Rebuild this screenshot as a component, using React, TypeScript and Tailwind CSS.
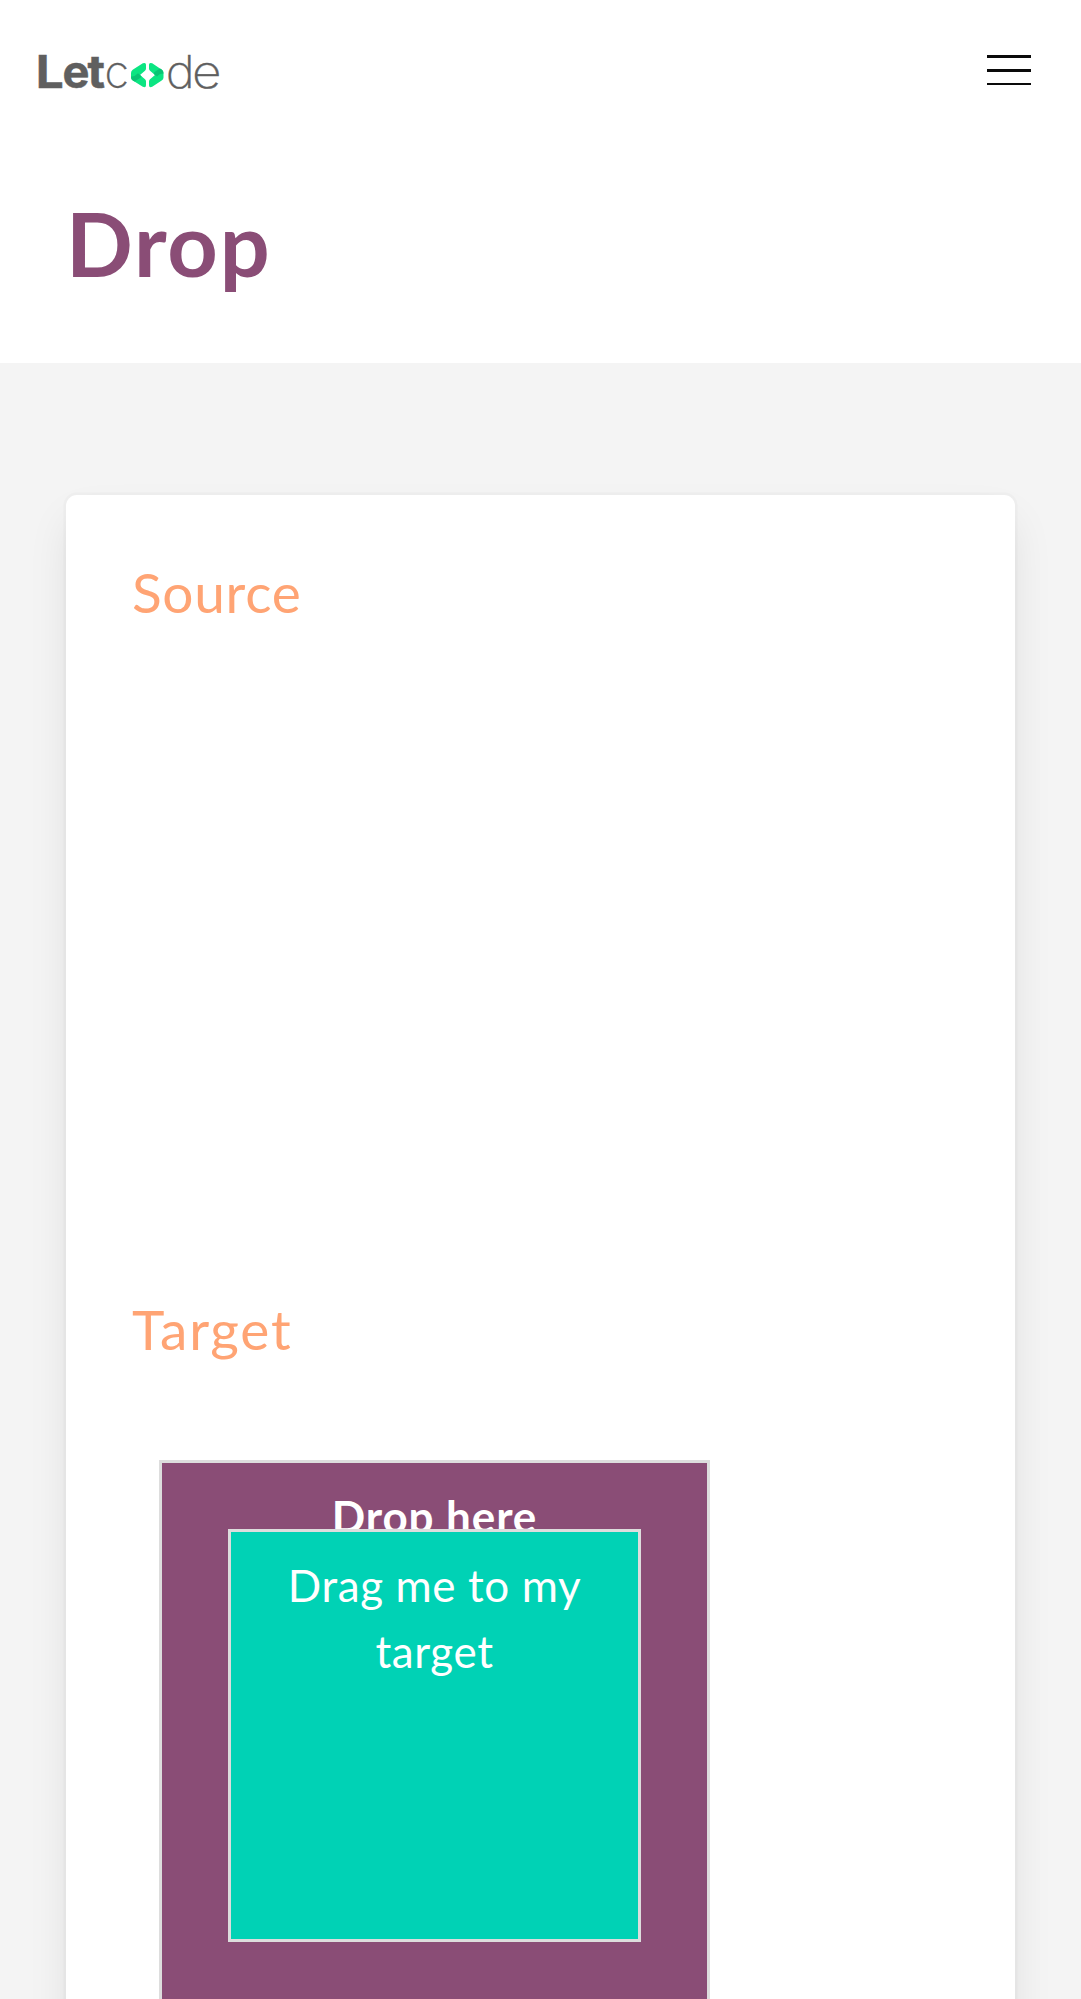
function Logo() {
  return (
    <svg className="block h-[60px] w-[220px]" viewBox="20 40 220 60" aria-label="Letcode">
      <g fill="#5f5f5f" fontFamily="Inter, 'Liberation Sans', sans-serif">
        <g fontSize="45.500" fontWeight="700">
          <text x="35.800" y="88" stroke="#5f5f5f" strokeWidth="0.5" textLength="28" lengthAdjust="spacingAndGlyphs">L</text>
          <text x="62.500" y="88" stroke="#5f5f5f" strokeWidth="0.5" textLength="27" lengthAdjust="spacingAndGlyphs">e</text>
          <text x="87.500" y="88" stroke="#5f5f5f" strokeWidth="0.5" textLength="17.500" lengthAdjust="spacingAndGlyphs">t</text>
        </g>
        <g fontSize="44.500" fontWeight="200" stroke="#5f5f5f" strokeWidth="0.3">
          <text x="104.500" y="87.700" textLength="24.500" lengthAdjust="spacingAndGlyphs">c</text>
          <text x="165.800" y="87.700" textLength="29" lengthAdjust="spacingAndGlyphs">d</text>
          <text x="192" y="87.700" textLength="29.500" lengthAdjust="spacingAndGlyphs">e</text>
        </g>
      </g>
      <path d="M142.800 63.300Q146 62 146 64.800V68.500q0 1.300-1 2.200l-5 4.300 5 4.300q1 .9 1 2.200v3.800q0 2.700-3.200 1.500l-10-6.300Q131 79.300 131 77.500v-4.500q0-2 1.700-3.200z" fill="#0be582" />
      <path d="M152.200 63.300Q149 62 149 64.800V68.500q0 1.300 1 2.200l5 4.300-5 4.300q-1 .9-1 2.200v3.800q0 2.700 3.200 1.500l9.500-6.300Q163.500 79.300 163.500 77.500v-4.500q0-2-1.700-3.200z" fill="#0be582" />
      <path d="M131 76.500q0 2.800 1.800 4l1.700 1.100 6-3.800 1-1.500-1.500-1.300-2-1.800q-3.500 3.800-7 3.300z" fill="#09c474" />
      <path d="M163.500 73.500q0-2.800-1.800-4l-1.700-1.100-5.500 3.500-.8 1.800 1.300 1.300 2 1.500q3-3.500 6.500-3z" fill="#09c474" />
    </svg>
  );
}

function Burger() {
  return (
    <button aria-label="menu" className="mr-[1px] flex h-[143px] w-[143px] flex-col items-center gap-[11px] pt-[55px]">
      <span className="h-[2.75px] w-[44px] bg-[#0a0a0a]" />
      <span className="h-[2.75px] w-[44px] bg-[#0a0a0a]" />
      <span className="h-[2.75px] w-[44px] bg-[#0a0a0a]" />
    </button>
  );
}

export default function App() {
  return (
    <div className="flex h-[1999px] w-[1081px] flex-col overflow-hidden bg-[#f4f4f4] font-['Lato','Noto_Sans',sans-serif]">
      <header className="h-[363px] shrink-0 bg-white">
        <nav className="flex h-[143px] items-start justify-between">
          <div className="pt-10 pl-5"><Logo /></div>
          <Burger />
        </nav>
        <h1 className="pt-[51px] pl-[66px] text-[88px] leading-[99px] font-bold tracking-[1.8px] whitespace-nowrap text-[#8a4d76]">Drop</h1>
      </header>
      <main className="px-[66px] pt-[132px]">
        <section className="h-[1700px] w-[949px] rounded-[11px] bg-white px-[66px] pt-[63px] shadow-[0_22px_44px_-5.5px_rgba(10,10,10,0.1),0_0_0_2.75px_rgba(10,10,10,0.02)]">
          <h2 className="h-[737px] text-[55px] leading-[69px] tracking-[0.7px] text-[#ffa474]">Source</h2>
          <h2 className="text-[55px] leading-[69px] tracking-[1.8px] text-[#ffa474]">Target</h2>
          <div className="mt-[96px] ml-[27px] h-[551px] w-[551px] border-3 border-[#dddddd] bg-[#8a4d76] px-[66px] pt-[20px] text-center text-[44px] leading-[66px] text-white">
            <p className="h-[46px] font-bold tracking-[0.9px] whitespace-nowrap">Drop here</p>
            <div className="relative h-[413px] w-[413px] border-3 border-[#dddddd] bg-[#00d2b5] pt-[20px]">
              <p className="tracking-[0.6px]">Drag me to my<br />target</p>
            </div>
          </div>
        </section>
      </main>
    </div>
  );
}
